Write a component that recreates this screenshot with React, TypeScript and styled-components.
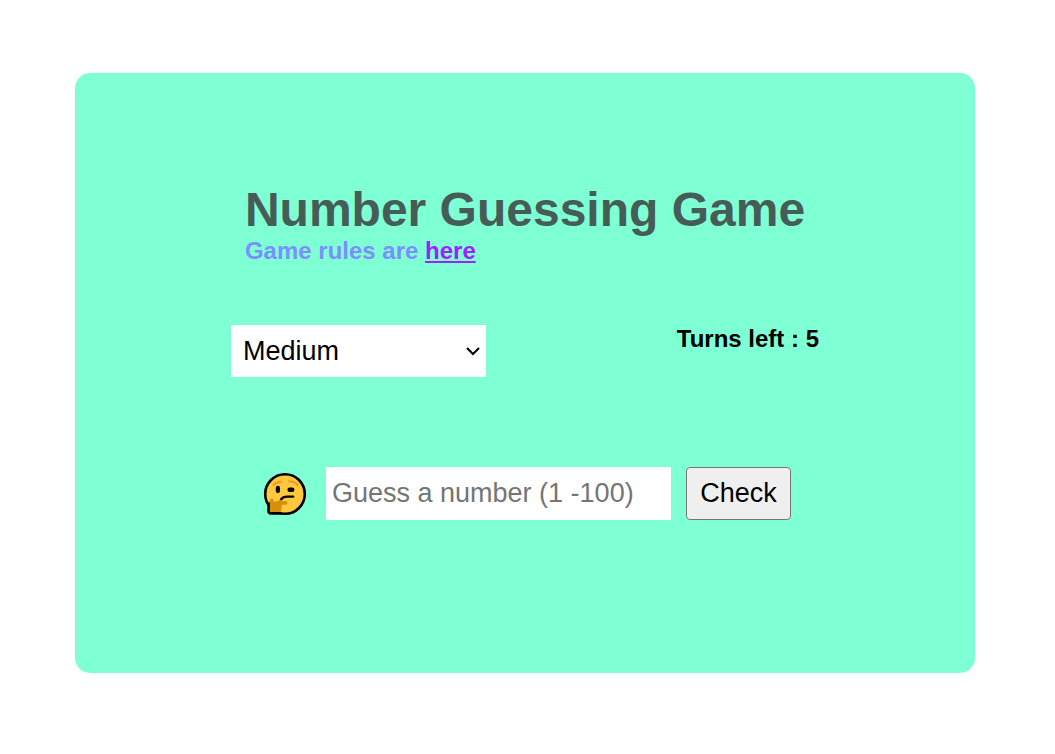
import React, { useState } from "react";
import styled, { createGlobalStyle } from "styled-components";

const GlobalStyle = createGlobalStyle`
  *, *::before, *::after { box-sizing: border-box; }
  body {
    margin: 0;
    background: #ffffff;
    color: #000000;
    font-family: "Liberation Sans", Arial, Helvetica, sans-serif;
  }
  #root { min-height: 100vh; display: flex; }
`;

const Page = styled.main`
  flex: 1;
  display: flex;
  align-items: center;
  justify-content: center;
  padding: 72px 80px 80px 75px;
`;

const Card = styled.section`
  width: 100%;
  max-width: 900px;
  min-height: 600px;
  padding: 108px 20px;
  border-radius: 15px;
  background: #7fffd4;
`;

const Header = styled.header`
  width: fit-content;
  margin: 0 auto;
`;

const Title = styled.h1`
  margin: 0;
  font-size: 48px;
  line-height: 58px;
  color: #455d56;
`;

const Rules = styled.h2`
  margin: 0;
  font-size: 24px;
  line-height: 24px;
  color: #7b8fff;
`;

const RulesLink = styled.a`
  color: #a020ff;
  text-decoration: underline;
`;

const StatusRow = styled.div`
  display: flex;
  flex-wrap: wrap;
  justify-content: space-between;
  align-items: flex-start;
  gap: 16px;
  max-width: 588px;
  margin: 62px auto 0;
`;

const SelectWrap = styled.div`
  display: grid;
  grid-template-columns: 1fr 24px;
  align-items: center;
  width: 255px;
`;

const LevelSelect = styled.select`
  grid-area: 1 / 1 / 2 / 3;
  height: 52px;
  padding: 0 32px 0 12px;
  border: 0;
  border-radius: 0;
  appearance: none;
  background: #ffffff;
  color: #000000;
  font: inherit;
  font-size: 27px;
`;

const Chevron = styled.svg`
  grid-area: 1 / 2 / 2 / 3;
  width: 14px;
  height: 10px;
  margin-left: 4px;
  pointer-events: none;
`;

const Turns = styled.p`
  margin: 0;
  font-size: 24px;
  line-height: 28px;
  font-weight: bold;
`;

const GuessForm = styled.form`
  display: flex;
  flex-wrap: wrap;
  align-items: center;
  justify-content: center;
  gap: 15px;
  margin-top: 90px;
`;

const Face = styled.svg`
  width: 52px;
  height: 52px;
`;

const GuessInput = styled.input`
  width: 345px;
  height: 53px;
  padding: 0 6px;
  border: 0;
  border-radius: 0;
  background: #ffffff;
  font: inherit;
  font-size: 27px;
  &::placeholder { color: #757575; opacity: 1; }
`;

const CheckButton = styled.button`
  width: 105px;
  height: 53px;
  padding: 0;
  border: 1px solid #767676;
  border-radius: 4px;
  background: #efefef;
  color: #000000;
  font: inherit;
  font-size: 27px;
`;

function ThinkingFace() {
  return (
    <Face viewBox="0 0 52 52" role="img" aria-label="Thinking face">
      <circle cx="26" cy="26" r="19.8" fill="#ffc83d" stroke="#000" strokeWidth="2.6" />
      <path
        d="M14.5 17Q17.5 13.6 22.2 13.8M30 13.4Q35.5 13.2 38.6 17"
        fill="none"
        stroke="#e8a02c"
        strokeWidth="2.2"
        strokeLinecap="round"
      />
      <rect x="16.8" y="17.8" width="4.2" height="7.4" rx="2.1" />
      <rect x="28.4" y="19.6" width="7" height="4.4" rx="2.2" />
      <path
        d="M22 31.4Q24.2 28.6 28 28.6H34.2"
        fill="none"
        stroke="#000"
        strokeWidth="2.4"
        strokeLinecap="round"
      />
      <path
        d="M9.3 36L11.2 32Q12.4 29.6 13.4 30.6Q14.6 31.8 15 34L21 32.3Q23.6 31.8 24 33.2H26.8Q28.8 33.6 28.6 35.2Q28.2 36.8 26 36.8H22.8Q22.4 39 22.6 41Q22 45 18 45H10.5Q9 45 9.3 42Z"
        fill="#d68f0c"
      />
      <path
        d="M9.6 34.5V41.5Q9 45.4 11.5 45.4H22"
        fill="none"
        stroke="#000"
        strokeWidth="2.6"
        strokeLinejoin="round"
      />
    </Face>
  );
}

export default function App() {
  const [level, setLevel] = useState("Medium");
  const [guess, setGuess] = useState("");
  return (
    <>
      <GlobalStyle />
      <Page>
        <Card>
          <Header>
            <Title>Number Guessing Game</Title>
            <Rules>
              Game rules are <RulesLink href="#rules">here</RulesLink>
            </Rules>
          </Header>
          <StatusRow>
            <SelectWrap>
              <LevelSelect
                aria-label="Difficulty"
                value={level}
                onChange={(e) => setLevel(e.target.value)}
              >
                <option>Easy</option>
                <option>Medium</option>
                <option>Hard</option>
              </LevelSelect>
              <Chevron viewBox="0 0 14 10" aria-hidden="true">
                <path d="M1 2L7 8L13 2" fill="none" stroke="#000" strokeWidth="2" />
              </Chevron>
            </SelectWrap>
            <Turns>Turns left : 5</Turns>
          </StatusRow>
          <GuessForm onSubmit={(e) => e.preventDefault()}>
            <ThinkingFace />
            <GuessInput
              aria-label="Your guess"
              placeholder="Guess a number (1 -100)"
              value={guess}
              onChange={(e) => setGuess(e.target.value)}
            />
            <CheckButton type="submit">Check</CheckButton>
          </GuessForm>
        </Card>
      </Page>
    </>
  );
}
